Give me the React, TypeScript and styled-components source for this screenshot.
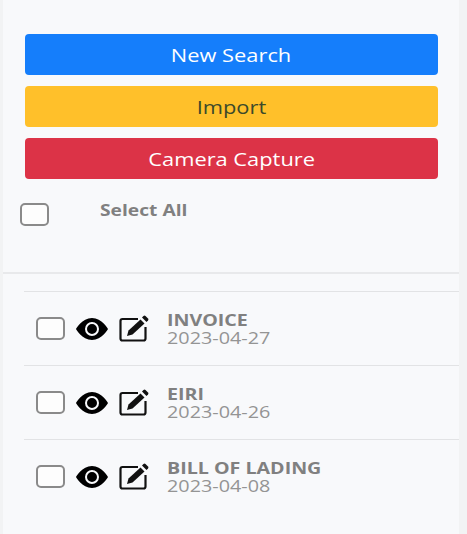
import React from 'react';
import styled, { createGlobalStyle } from 'styled-components';
import { BsEyeFill } from 'react-icons/bs';

const GlobalStyle = createGlobalStyle`
	html, body {
		margin: 0;
		padding: 0;
		background: #f2f3f4;
		font-family: 'Open Sans', 'Liberation Sans', sans-serif;
	}
`;

type Doc = { title: string; date: string };

const docs: Doc[] = [
	{ title: 'INVOICE', date: '2023-04-27' },
	{ title: 'EIRI', date: '2023-04-26' },
	{ title: 'BILL OF LADING', date: '2023-04-08' },
];

const EditIcon: React.FC = () => (
	<EditSvg viewBox="0 0 32 30">
		<path d="M20 5H4.5a2 2 0 0 0-2 2v17.5a2 2 0 0 0 2 2h21a2 2 0 0 0 2-2V13" fill="none" stroke="currentColor" strokeWidth="2.2" />
		<path d="M9 22l1.5-5.5L22.5 5.5l4 4-12 11z" fill="currentColor" />
		<path d="M24 3.5l1.5-1.5a1.5 1.5 0 0 1 2 0l2.5 2.5a1.5 1.5 0 0 1 0 2L28.5 8z" fill="currentColor" />
	</EditSvg>
);

const App: React.FC = () => (
	<>
		<GlobalStyle />
		<Sidebar>
			<Actions>
				<ActionButton $bg="#157efb" $color="#ffffff"><ButtonText>New Search</ButtonText></ActionButton>
				<ActionButton $bg="#ffc02a" $color="#3c4a2a"><ButtonText>Import</ButtonText></ActionButton>
				<ActionButton $bg="#dc3347" $color="#ffffff"><ButtonText>Camera Capture</ButtonText></ActionButton>
			</Actions>
			<SelectAllRow>
				<CheckBox />
				<SelectAllLabel>Select All</SelectAllLabel>
			</SelectAllRow>
			<List>
				{docs.map((doc) => (
					<Row key={doc.title}>
						<CheckBox />
						<EyeIcon />
						<EditIcon />
						<Info>
							<Title>{doc.title}</Title>
							<DateText>{doc.date}</DateText>
						</Info>
					</Row>
				))}
			</List>
		</Sidebar>
	</>
);

const Sidebar = styled.div`
	box-sizing: border-box;
	width: 456px;
	height: 534px;
	margin-left: 3px;
	background: #f8f9fb;
	overflow: hidden;
`;

const Actions = styled.div`
	display: flex;
	flex-direction: column;
	gap: 11px;
	padding: 34px 21px 0 22px;
`;

const ActionButton = styled.div<{ $bg: string; $color: string }>`
	height: 41px;
	display: flex;
	align-items: center;
	justify-content: center;
	border-radius: 4px;
	background: ${(props) => props.$bg};
	color: ${(props) => props.$color};
`;

/* the reference is a horizontally stretched capture, so the text is widened too */
const ButtonText = styled.span`
	font-size: 18.5px;
	transform: scaleX(1.18);
`;

const SelectAllRow = styled.div`
	display: flex;
	align-items: flex-start;
	height: 95px;
	padding: 24px 0 0 17px;
	gap: 51px;
	box-sizing: border-box;
	border-bottom: 2px solid #e8e9eb;
	margin-bottom: 17px;
`;

const CheckBox = styled.span`
	flex: none;
	box-sizing: border-box;
	width: 29px;
	height: 23px;
	background: #fdfdfd;
	border: 2.5px solid #8a8a8a;
	border-radius: 5px;
`;

const SelectAllLabel = styled.div`
	font-size: 15.5px;
	font-weight: 700;
	line-height: 14px;
	color: #808080;
	transform: scaleX(1.24);
	transform-origin: left center;
`;

const List = styled.div`
	display: flex;
	flex-direction: column;
	margin-left: 21px;
`;

const Row = styled.div`
	box-sizing: border-box;
	height: 74px;
	display: flex;
	align-items: center;
	padding: 0 0 0 12px;
	border-top: 1px solid #e2e3e5;
`;

const EyeIcon = styled(BsEyeFill)`
	flex: none;
	width: 32px;
	height: 32px;
	margin-left: 11px;
	color: #000000;
`;

const EditSvg = styled.svg`
	flex: none;
	width: 32px;
	height: 30px;
	margin-left: 10px;
	color: #111111;
`;

const Info = styled.div`
	display: flex;
	flex-direction: column;
	margin-left: 17px;
`;

const Title = styled.div`
	font-size: 16.5px;
	font-weight: 700;
	line-height: 18px;
	color: #808080;
	transform: scaleX(1.19);
	transform-origin: left center;
`;

const DateText = styled.div`
	font-size: 16.5px;
	line-height: 18px;
	color: #949494;
	transform: scaleX(1.2);
	transform-origin: left center;
`;

export default App;
